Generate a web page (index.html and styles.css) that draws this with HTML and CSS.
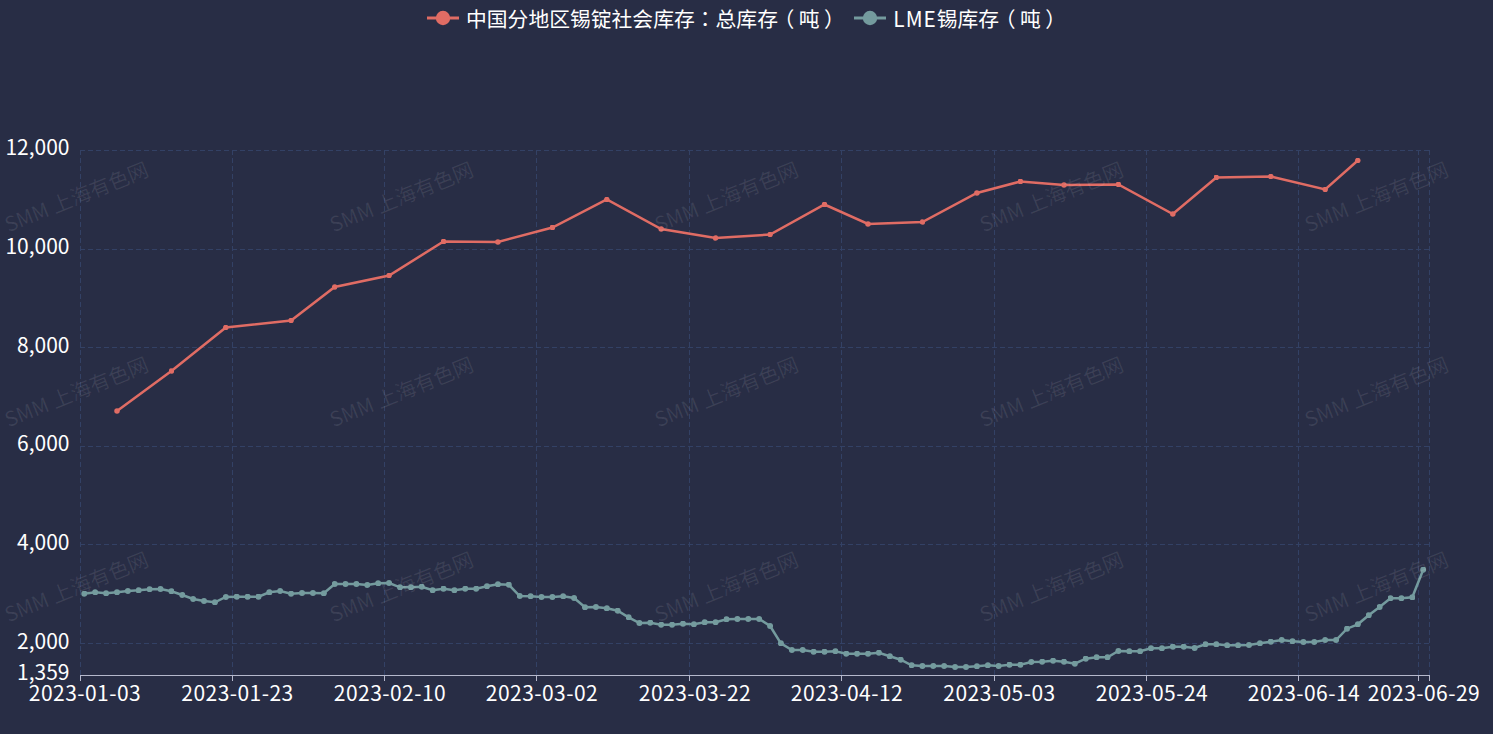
FILE: index.html
```html
<!DOCTYPE html>
<html lang="zh-CN">
<head>
<meta charset="utf-8">
<title>锡库存</title>
<link rel="stylesheet" href="styles.css">
</head>
<body>
<main class="stage">
  <ul class="legend">
    <li class="legend-item">
      <svg class="legend-icon" viewBox="0 0 32 16"><path class="sw-red-line" d="M0 8H32"/><circle class="sw-red" cx="16" cy="8" r="7.2"/></svg>
      <span>中国分地区锡锭社会库存<span class="pn">：</span>总库存<span class="pn">（</span>吨<span class="pn">）</span></span>
    </li>
    <li class="legend-item">
      <svg class="legend-icon" viewBox="0 0 32 16"><path class="sw-teal-line" d="M0 8H32"/><circle class="sw-teal" cx="16" cy="8" r="7.2"/></svg>
      <span><span class="latin">LME</span>锡库存<span class="pn">（</span>吨<span class="pn">）</span></span>
    </li>
  </ul>
  <svg class="chart" viewBox="0 36 1493 698">
    <defs>
      <marker id="dot-red" viewBox="0 0 6 6" refX="3" refY="3" markerWidth="5.5" markerHeight="5.5" markerUnits="userSpaceOnUse"><circle class="sw-red" cx="3" cy="3" r="3"/></marker>
      <marker id="dot-teal" viewBox="0 0 6 6" refX="3" refY="3" markerWidth="6" markerHeight="6" markerUnits="userSpaceOnUse"><circle class="sw-teal" cx="3" cy="3" r="3"/></marker>
    </defs>
    <g class="grid">
      <path d="M80 150.5H1429.5M80 249.5H1429.5M80 347.5H1429.5M80 446.5H1429.5M80 544.5H1429.5M80 643.5H1429.5"/>
      <path d="M80.5 150V675M232.5 150V675M384.5 150V675M536.5 150V675M689.5 150V675M841.5 150V675M994.5 150V675M1146.5 150V675M1298.5 150V675M1418.5 150V675M1429.5 150V675"/>
    </g>
    <path class="axis" d="M80 675.5H1430M80.5 675V681M232.5 675V681M384.5 675V681M536.5 675V681M689.5 675V681M841.5 675V681M994.5 675V681M1146.5 675V681M1298.5 675V681M1418.5 675V681M1429.5 675V681"/>
    <g class="y-labels">
      <text x="69.5" y="154.5">12,000</text>
      <text x="69.5" y="253.5">10,000</text>
      <text x="69.5" y="353">8,000</text>
      <text x="69.5" y="451">6,000</text>
      <text x="69.5" y="550">4,000</text>
      <text x="69.5" y="649">2,000</text>
      <text x="69.5" y="680">1,359</text>
    </g>
    <g class="x-labels">
      <text x="85" y="701">2023-01-03</text>
      <text x="237.5" y="701">2023-01-23</text>
      <text x="390" y="701">2023-02-10</text>
      <text x="542" y="701">2023-03-02</text>
      <text x="695" y="701">2023-03-22</text>
      <text x="847" y="701">2023-04-12</text>
      <text x="999.5" y="701">2023-05-03</text>
      <text x="1152" y="701">2023-05-24</text>
      <text x="1304" y="701">2023-06-14</text>
      <text x="1424" y="701">2023-06-29</text>
    </g>
    <polyline class="series-red" points="117,411 171.4,371 225.8,327.5 291.1,320.5 334.7,287 389.1,275.5 443.5,241.5 497.9,242 552.4,227.5 606.8,199.5 661.2,229 715.6,238 770.1,234.5 824.5,204.5 868,224 922.4,222 976.9,193 1020.4,181.5 1064,185 1118.4,184.5 1172.8,214 1216.3,177.5 1270.8,176.5 1325.2,189.5 1357.8,160.5"/>
    <polyline class="series-teal" points="84.3,593.7 95.2,592.3 106.1,593.3 117,592.3 127.8,591 138.7,590.3 149.6,589.3 160.5,589 171.4,591.3 182.3,595 193.2,599 204,601 214.9,602.3 225.8,597 236.7,596.7 247.6,596.7 258.5,596.7 269.3,592.3 280.2,591 291.1,593.7 302,593 312.9,593 323.8,593.3 334.7,584 345.5,584 356.4,584 367.3,585 378.2,583.3 389.1,583 400,587.3 410.9,587.3 421.7,586.7 432.6,590.3 443.5,588.7 454.4,590.3 465.3,588.7 476.2,588.7 487,586.3 497.9,584.3 508.8,584.7 519.7,596 530.6,596.3 541.5,597 552.4,597 563.2,596.3 574.1,598 585,607.3 595.9,607 606.8,608.3 617.7,610.7 628.6,617.3 639.4,623 650.3,622.7 661.2,624.7 672.1,624.7 683,623.7 693.9,624.3 704.7,622.3 715.6,622.3 726.5,619.3 737.4,619 748.3,619 759.2,619 770.1,626 780.9,643.3 791.8,650 802.7,650 813.6,651.7 824.5,651.7 835.4,651.3 846.3,653.7 857.1,653.7 868,653.7 878.9,652.7 889.8,656.3 900.7,659.7 911.6,665.3 922.4,666 933.3,666 944.2,666 955.1,667 966,667 976.9,666.3 987.8,665.3 998.6,666 1009.5,664.7 1020.4,664.7 1031.3,662 1042.2,661.7 1053.1,660.7 1064,661.7 1074.8,663.7 1085.7,658.7 1096.6,657.3 1107.5,657.3 1118.4,651 1129.3,651.3 1140.1,651.3 1151,648.3 1161.9,648.3 1172.8,646.7 1183.7,646.7 1194.6,648 1205.5,644.3 1216.3,644.3 1227.2,645.3 1238.1,645.3 1249,645 1259.9,643.3 1270.8,641.7 1281.7,640 1292.5,641.3 1303.4,642 1314.3,642 1325.2,640 1336.1,640 1347,628.7 1357.8,624.3 1368.7,615.3 1379.6,607 1390.5,598.3 1401.4,598.3 1412.3,597.3 1423.2,569.7"/>
    <g class="watermarks">
      <text transform="translate(8.5 37.5) rotate(-22)">SMM 上海有色网</text>
      <text transform="translate(333.5 37.5) rotate(-22)">SMM 上海有色网</text>
      <text transform="translate(658.5 37.5) rotate(-22)">SMM 上海有色网</text>
      <text transform="translate(983.5 37.5) rotate(-22)">SMM 上海有色网</text>
      <text transform="translate(1308.5 37.5) rotate(-22)">SMM 上海有色网</text>
      <text transform="translate(8.5 232.5) rotate(-22)">SMM 上海有色网</text>
      <text transform="translate(333.5 232.5) rotate(-22)">SMM 上海有色网</text>
      <text transform="translate(658.5 232.5) rotate(-22)">SMM 上海有色网</text>
      <text transform="translate(983.5 232.5) rotate(-22)">SMM 上海有色网</text>
      <text transform="translate(1308.5 232.5) rotate(-22)">SMM 上海有色网</text>
      <text transform="translate(8.5 427.5) rotate(-22)">SMM 上海有色网</text>
      <text transform="translate(333.5 427.5) rotate(-22)">SMM 上海有色网</text>
      <text transform="translate(658.5 427.5) rotate(-22)">SMM 上海有色网</text>
      <text transform="translate(983.5 427.5) rotate(-22)">SMM 上海有色网</text>
      <text transform="translate(1308.5 427.5) rotate(-22)">SMM 上海有色网</text>
      <text transform="translate(8.5 622.5) rotate(-22)">SMM 上海有色网</text>
      <text transform="translate(333.5 622.5) rotate(-22)">SMM 上海有色网</text>
      <text transform="translate(658.5 622.5) rotate(-22)">SMM 上海有色网</text>
      <text transform="translate(983.5 622.5) rotate(-22)">SMM 上海有色网</text>
      <text transform="translate(1308.5 622.5) rotate(-22)">SMM 上海有色网</text>
    </g>
  </svg>
</main>
</body>
</html>
```
FILE: styles.css
```css
html, body {
  margin: 0;
  height: 100%;
  background: #282d45;
  overflow: hidden;
}
.stage {
  display: flex;
  flex-direction: column;
  width: 1493px;
  height: 734px;
  font-family: "Noto Sans CJK SC", "Noto Sans", sans-serif;
  color: #fff;
}
.legend {
  display: flex;
  justify-content: flex-start;
  gap: 14px;
  height: 36px;
  margin: 0;
  padding: 3px 0 0 427px;
  box-sizing: border-box;
  list-style: none;
  font-size: 20.8px;
  line-height: 30px;
}
.legend-item {
  display: flex;
  align-items: center;
  gap: 7px;
  height: 30px;
  white-space: nowrap;
}
.legend-icon {
  width: 32px;
  height: 16px;
}
.latin {
  letter-spacing: 1px;
}
.pn {
  display: inline-block;
  width: 1em;
  text-align: center;
  font-family: "Noto Sans CJK TC", sans-serif;
  font-feature-settings: "palt";
}
.chart {
  display: block;
  width: 1493px;
  height: 698px;
}
.chart text {
  font-family: "Noto Sans CJK SC", "Noto Sans", sans-serif;
}
.sw-red { fill: #e06c64; }
.sw-teal { fill: #749b9e; }
.sw-red-line { stroke: #e06c64; stroke-width: 3; fill: none; }
.sw-teal-line { stroke: #749b9e; stroke-width: 3; fill: none; }
.grid path {
  fill: none;
  stroke: #334165;
  stroke-width: 1;
  stroke-dasharray: 5 3;
}
.axis {
  fill: none;
  stroke: #b5b8cc;
  stroke-width: 1;
}
.y-labels text {
  font-size: 21px;
  fill: #fff;
  text-anchor: end;
}
.x-labels text {
  font-size: 21px;
  letter-spacing: 0.45px;
  fill: #fff;
  text-anchor: middle;
}
.series-red {
  fill: none;
  stroke: #e06c64;
  stroke-width: 2.5;
  marker-start: url(#dot-red);
  marker-mid: url(#dot-red);
  marker-end: url(#dot-red);
}
.series-teal {
  fill: none;
  stroke: #749b9e;
  stroke-width: 2.5;
  marker-start: url(#dot-teal);
  marker-mid: url(#dot-teal);
  marker-end: url(#dot-teal);
}
.watermarks text {
  font-size: 20.5px;
  fill: rgba(255, 255, 255, 0.09);
}
```
